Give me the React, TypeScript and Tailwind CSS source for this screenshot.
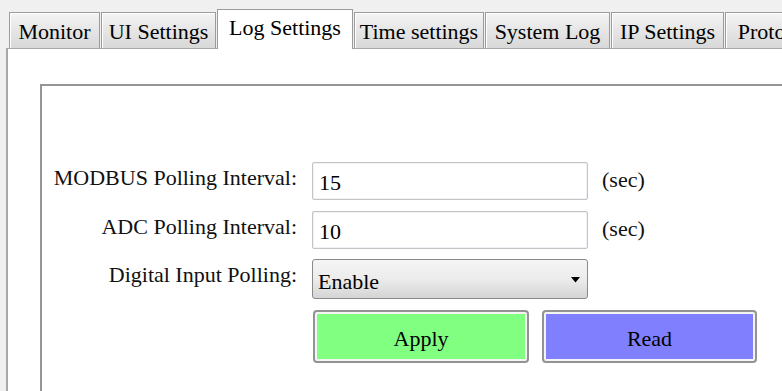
import React from 'react';

const serif = { fontFamily: '"Liberation Serif", "Times New Roman", serif' };

const tabs = [
  { label: 'Monitor', w: 'w-[91px]' },
  { label: 'UI Settings', w: 'w-[115px]' },
  { label: 'Log Settings', w: 'w-[136px]', active: true },
  { label: 'Time settings', w: 'w-[130px]' },
  { label: 'System Log', w: 'w-[125px]' },
  { label: 'IP Settings', w: 'w-[113px]' },
  { label: 'Protocol', w: 'w-[100px]' },
];

function Tab({ label, w, active }: { label: string; w: string; active?: boolean }) {
  if (active) {
    return (
      <div
        className={`${w} relative z-10 -mb-px flex h-[40px] shrink-0 items-start justify-center border border-b-0 border-[#9a9a9a] bg-white pt-[5px] text-[22px] leading-[25px] text-black`}
      >
        {label}
      </div>
    );
  }
  return (
    <div
      className={`${w} flex h-[36px] shrink-0 items-start justify-center overflow-hidden whitespace-nowrap border border-b-0 border-[#9c9c9c] bg-gradient-to-b from-[#f4f4f4] to-[#d8d8d8] pt-[6px] text-[22px] leading-[25px] text-black shadow-[inset_1px_1px_0_#ffffff]`}
    >
      {label}
    </div>
  );
}

function Row({ label, children, mt }: { label: string; children: React.ReactNode; mt: string }) {
  return (
    <div className={`flex ${mt}`}>
      <div className="w-[256px] shrink-0 pr-px pt-[3px] text-right text-[22px] leading-[25px] text-[#111]">{label}</div>
      <div className="ml-[14px] flex items-center">{children}</div>
    </div>
  );
}

function TextBox({ value }: { value: string }) {
  return (
    <div className="flex items-center">
      <input
        readOnly
        defaultValue={value}
        className="h-[38px] w-[276px] rounded-[2px] border border-[#c4c4c4] bg-white px-[6px] pt-[3px] text-[22px] text-black shadow-[inset_0_0_0_1px_#eef2f6] outline-none"
        style={serif}
      />
      <span className="ml-[14px] pb-[3px] text-[22px] leading-[25px] text-[#111]">(sec)</span>
    </div>
  );
}

export default function App() {
  return (
    <div className="h-[391px] w-[782px] overflow-hidden bg-[#f0f0f0]" style={serif}>
      {/* Tab strip */}
      <div className="flex w-[900px] items-end gap-[1px] pl-[9px] pt-[9px]">
        {tabs.map((t) => (
          <Tab key={t.label} {...t} />
        ))}
      </div>

      {/* Panel */}
      <div className="ml-[6px] h-[400px] w-[820px] border-l-2 border-t border-[#a8a8a8] bg-white pl-[32px] pt-[35px]">
        <div className="h-[360px] w-[800px] border-2 border-[#959595] pt-[76px]">
          <Row label="MODBUS Polling Interval:" mt="mt-0">
            <TextBox value="15" />
          </Row>
          <Row label="ADC Polling Interval:" mt="mt-[11px]">
            <TextBox value="10" />
          </Row>
          <Row label="Digital Input Polling:" mt="mt-[10px]">
            <div className="flex h-[40px] w-[276px] items-center justify-between rounded-[3px] border border-[#8a8a8a] bg-gradient-to-b from-[#f5f5f5] via-[#ececec] to-[#d5d5d5] pl-[5px] pr-[7px] pt-[5px] text-[22px] text-black">
              <span>Enable</span>
              <svg width="9" height="6" viewBox="0 0 9 6" className="mb-[3px]">
                <polygon points="0,0 9,0 4.5,5.5" fill="#000" />
              </svg>
            </div>
          </Row>
          <div className="mt-[11px] flex gap-[13px] pl-[271px]">
            <button className="h-[53px] w-[216px] rounded-[4px] border-2 border-[#939393] bg-[#f4f4f4] p-[2px]">
              <div className="flex h-full w-full items-center justify-center bg-[#80ff80] pt-[4px] text-[22px] text-black">
                Apply
              </div>
            </button>
            <button className="h-[53px] w-[215px] rounded-[4px] border-2 border-[#939393] bg-[#f4f4f4] p-[2px]">
              <div className="flex h-full w-full items-center justify-center bg-[#8080ff] pt-[4px] text-[22px] text-black">
                Read
              </div>
            </button>
          </div>
        </div>
      </div>
    </div>
  );
}
